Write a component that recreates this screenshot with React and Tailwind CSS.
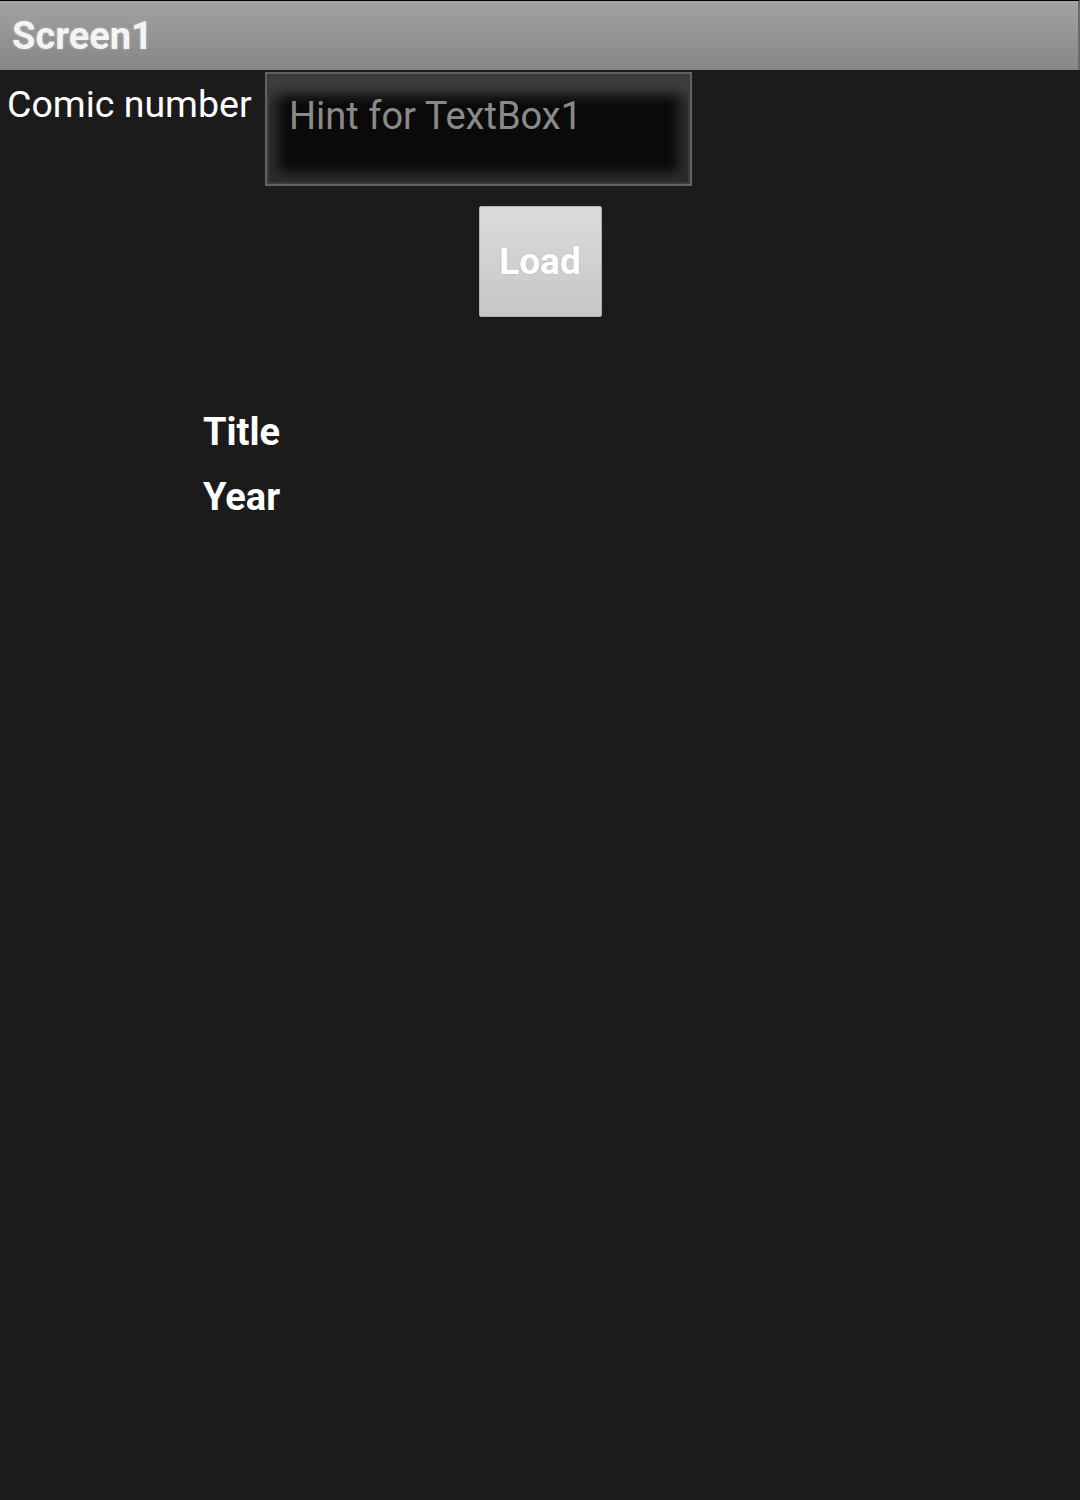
export default function App() {
  return (
    <div
      className="w-[1080px] h-[1500px] bg-[#1b1b1b] text-white overflow-hidden"
      style={{ fontFamily: "Roboto, 'Noto Sans', sans-serif" }}
    >
      {/* Title bar */}
      <div className="h-[70px] border-t border-black border-r-2 border-r-[#6a6a6a] bg-gradient-to-b from-[#a2a2a2] to-[#868686] flex items-center pl-[12px]">
        <span className="text-[38px] leading-[44px] font-bold text-[#f4f4f4] [text-shadow:0_0_3px_rgba(255,255,255,0.35)]">
          Screen1
        </span>
      </div>

      {/* Input row */}
      <div className="flex items-start pt-[2px]">
        <div className="w-[265px] pl-[7px] mt-[10px] text-[37.5px] leading-[44px] text-white">
          Comic number
        </div>
        <div className="w-[427px] h-[114px] border-2 border-[#626262] bg-[#0a0a0a] shadow-[inset_0_0_0_2px_#3a3a3a,inset_0_26px_14px_-6px_#3e3e3e,inset_0_0_12px_12px_#2c2c2c] pl-[22px] pt-[20px]">
          <span className="text-[38px] leading-[44px] text-[#8a8a8a]">Hint for TextBox1</span>
        </div>
      </div>

      {/* Load button */}
      <div className="flex justify-center mt-[20px]">
        <button className="w-[123px] h-[111px] bg-gradient-to-b from-[#dcdcdc] to-[#c6c6c6] border border-[#b0b0b0] rounded-[2px] flex items-center justify-center">
          <span className="text-[37px] leading-[44px] font-bold text-white [text-shadow:0_0_2px_rgba(0,0,0,0.15)]">Load</span>
        </button>
      </div>

      {/* Labels */}
      <div className="mt-[83px] pl-[203px] flex flex-col">
        <div className="h-[65px] leading-[65px] text-[38px] font-bold">Title</div>
        <div className="h-[65px] leading-[65px] text-[38px] font-bold">Year</div>
      </div>
    </div>
  );
}
